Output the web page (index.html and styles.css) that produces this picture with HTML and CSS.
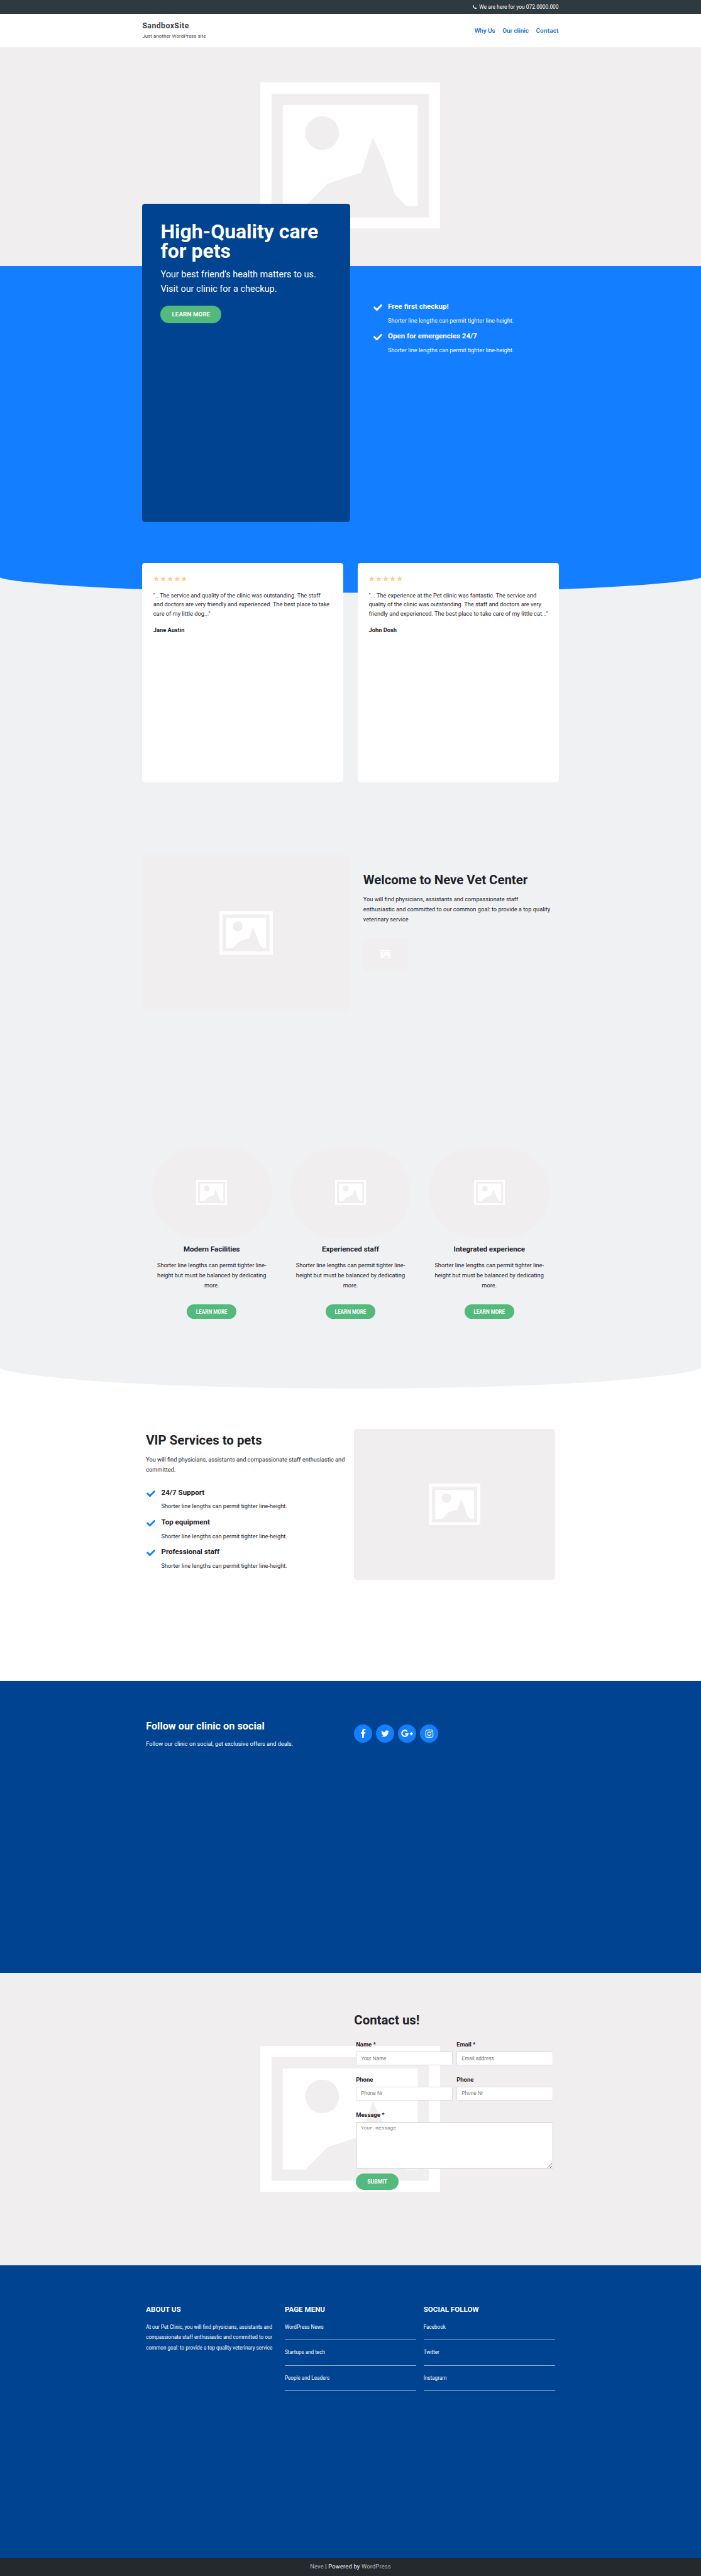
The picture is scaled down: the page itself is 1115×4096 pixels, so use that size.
FILE: index.html
```html
<!DOCTYPE html>
<html lang="en">
<head>
<meta charset="utf-8">
<title>SandboxSite</title>
<link rel="stylesheet" href="styles.css">
</head>
<body>
<svg width="0" height="0" class="defs" aria-hidden="true">
  <symbol id="placeholder" viewBox="0 0 16 13">
    <path fill="#fff" fill-rule="evenodd" d="M0 0H16V13H0ZM1 1V12H15V1Z"/>
    <path fill="#fff" d="M2 2H14V11H13L12 10L11 7L10.05 5.05Q10 4.95 9.95 5.05L9 8L6 9L4 11H2Z"/>
    <circle cx="5.5" cy="4.5" r="1.5" fill="#f0eeef"/>
  </symbol>
  <symbol id="check" viewBox="0 72 512 370">
    <path d="M173.898 439.404l-166.4-166.4c-9.997-9.997-9.997-26.206 0-36.204l36.203-36.204c9.997-9.998 26.207-9.998 36.204 0L192 312.69 432.095 72.596c9.997-9.997 26.207-9.997 36.204 0l36.203 36.204c9.997 9.997 9.997 26.206 0 36.204l-294.4 294.401c-9.998 9.997-26.207 9.997-36.204-.001z"/>
  </symbol>
  <symbol id="stars" viewBox="0 0 92 15">
    <g id="star"><path d="M7.5 0L9.8 4.8L15 5.5L11.2 9.2L12.1 14.5L7.5 12L2.9 14.5L3.8 9.2L0 5.5L5.2 4.8Z"/></g>
    <use href="#star" x="19.1"/><use href="#star" x="38.2"/><use href="#star" x="57.3"/><use href="#star" x="76.4"/>
  </symbol>
  <symbol id="curve" viewBox="0 0 1000 100" preserveAspectRatio="none">
    <path d="M500 97C126.7 96.3 .8 19.8 0 0H1000C999.2 19.8 873.3 96.3 500 97Z"/>
  </symbol>
</svg>

<div class="topbar">
  <div class="container topbar-inner">
    <svg class="phone" viewBox="0 0 11 11"><path fill="#fff" d="M0 2C0 1 1 0 2 0L3.6 3.2L2.7 4.6C3.4 6.3 4.7 7.6 6.4 8.3L7.8 7.4L11 9C11 10 10 11 9 11C4 11 0 7 0 2Z"/></svg>
    <span>We are here for you 072.0000.000</span>
  </div>
</div>

<header class="header">
  <div class="container header-inner">
    <div class="brand">
      <p class="brand-title">SandboxSite</p>
      <p class="brand-tag">Just another WordPress site</p>
    </div>
    <nav class="nav"><a class="nav-why">Why Us</a><a class="nav-clinic">Our clinic</a><a class="nav-contact">Contact</a></nav>
  </div>
</header>

<section class="hero"><svg class="hero-art"><use href="#placeholder"/></svg></section>

<section class="intro">
  <div class="container intro-inner">
    <div class="hero-card">
      <h1>High-Quality care<br>for pets</h1>
      <p>Your best friend’s health matters to us.<br>Visit our clinic for a checkup.</p>
      <a class="btn btn-large">LEARN MORE</a>
    </div>
    <ul class="checks checks-light">
      <li><svg><use href="#check"/></svg><div><h4>Free first checkup!</h4><p>Shorter line lengths can permit tighter line-height.</p></div></li>
      <li><svg><use href="#check"/></svg><div><h4>Open for emergencies 24/7</h4><p>Shorter line lengths can permit tighter line-height.</p></div></li>
    </ul>
  </div>
  <svg class="curve curve-blue"><use href="#curve"/></svg>
</section>

<section class="about">
  <div class="container quotes">
    <article class="quote">
      <svg class="stars"><use href="#stars"/></svg>
      <p>"...The service and quality of the clinic was outstanding. The staff<br>and doctors are very friendly and experienced. The best place to take<br>care of my little dog..."</p>
      <b>Jane Austin</b>
    </article>
    <article class="quote">
      <svg class="stars"><use href="#stars"/></svg>
      <p>"... The experience at the Pet clinic was fantastic. The service and<br>quality of the clinic was outstanding. The staff and doctors are very<br>friendly and experienced. The best place to take care of my little cat..."</p>
      <b>John Dosh</b>
    </article>
  </div>
  <div class="container welcome">
    <div class="pic pic-welcome"><svg><use href="#placeholder"/></svg></div>
    <div class="welcome-text">
      <h2>Welcome to Neve Vet Center</h2>
      <p class="text">You will find physicians, assistants and compassionate staff<br>enthusiastic and committed to our common goal: to provide a top quality<br>veterinary service</p>
      <div class="pic pic-sign"><svg><use href="#placeholder"/></svg></div>
    </div>
  </div>
  <div class="container features">
    <article><div class="pic pic-feature"><svg><use href="#placeholder"/></svg></div><h3>Modern Facilities</h3><p class="text">Shorter line lengths can permit tighter line-<br>height but must be balanced by dedicating<br>more.</p><a class="btn btn-small">LEARN MORE</a></article>
    <article><div class="pic pic-feature"><svg><use href="#placeholder"/></svg></div><h3>Experienced staff</h3><p class="text">Shorter line lengths can permit tighter line-<br>height but must be balanced by dedicating<br>more.</p><a class="btn btn-small">LEARN MORE</a></article>
    <article><div class="pic pic-feature"><svg><use href="#placeholder"/></svg></div><h3>Integrated experience</h3><p class="text">Shorter line lengths can permit tighter line-<br>height but must be balanced by dedicating<br>more.</p><a class="btn btn-small">LEARN MORE</a></article>
  </div>
  <svg class="curve curve-grey"><use href="#curve"/></svg>
</section>

<section class="vip">
  <div class="container vip-inner">
    <div class="vip-text">
      <h2>VIP Services to pets</h2>
      <p class="text">You will find physicians, assistants and compassionate staff enthusiastic and<br>committed.</p>
      <ul class="checks">
        <li><svg><use href="#check"/></svg><div><h4>24/7 Support</h4><p>Shorter line lengths can permit tighter line-height.</p></div></li>
        <li><svg><use href="#check"/></svg><div><h4>Top equipment</h4><p>Shorter line lengths can permit tighter line-height.</p></div></li>
        <li><svg><use href="#check"/></svg><div><h4>Professional staff</h4><p>Shorter line lengths can permit tighter line-height.</p></div></li>
      </ul>
    </div>
    <div class="pic pic-vip"><svg><use href="#placeholder"/></svg></div>
  </div>
</section>

<section class="social">
  <div class="container social-inner">
    <div class="social-text">
      <h2>Follow our clinic on social</h2>
      <p class="text">Follow our clinic on social, get exclusive offers and deals.</p>
    </div>
    <div class="social-icons">
      <a><svg viewBox="0 0 50 50"><path fill="#fff" d="M31.7 12.3V16.1H29.3C27.5 16.1 27.1 17 27.1 18.2V21.1H31.6L31 25.3H27.1V36H22.4V25.3H19V21.1H22.4V17.8C22.4 14.1 24.6 12.1 28 12.1C29.6 12.1 31 12.2 31.7 12.3Z"/></svg></a>
      <a><svg viewBox="0 0 50 50"><path fill="#fff" transform="translate(14.3 14) scale(.0425)" d="M459.37 151.716c.325 4.548.325 9.097.325 13.645 0 138.72-105.583 298.558-298.558 298.558-59.452 0-114.68-17.219-161.137-47.106 8.447.974 16.568 1.299 25.34 1.299 49.055 0 94.213-16.568 130.274-44.832-46.132-.975-84.792-31.188-98.112-72.772 6.498.974 12.995 1.624 19.818 1.624 9.421 0 18.843-1.3 27.614-3.573-48.081-9.747-84.143-51.98-84.143-102.985v-1.299c13.969 7.797 30.214 12.67 47.431 13.319-28.264-18.843-46.781-51.005-46.781-87.391 0-19.492 5.197-37.36 14.294-52.954 51.655 63.675 129.3 105.258 216.365 109.807-1.624-7.797-2.599-15.918-2.599-24.04 0-57.828 46.782-104.934 104.934-104.934 30.213 0 57.502 12.67 76.67 33.137 23.715-4.548 46.456-13.32 66.599-25.34-7.798 24.366-24.366 44.833-46.132 57.827 21.117-2.273 41.584-8.122 60.426-16.243-14.292 20.791-32.161 39.308-52.628 54.253z"/></svg></a>
      <a><svg viewBox="0 0 50 50" fill="none" stroke="#fff"><path stroke-width="3.6" d="M25.4 19.2A8.2 8.2 0 1 0 27 26H19.4"/><path stroke-width="3" d="M32.3 25.5H41.1M36.7 21.1V29.9"/></svg></a>
      <a><svg viewBox="0 0 50 50" fill="none" stroke="#fff" stroke-width="2"><rect x="15.7" y="15" width="19.8" height="20" rx="5.5"/><circle cx="25.5" cy="25.2" r="4.7"/><circle cx="31" cy="19.6" r="1.3" fill="#fff" stroke="none"/></svg></a>
    </div>
  </div>
</section>

<section class="contact">
  <svg class="hero-art"><use href="#placeholder"/></svg>
  <div class="container">
    <form class="form">
      <h2>Contact us!</h2>
      <div class="fields">
        <label>Name *<input placeholder="Your Name"></label>
        <label>Email *<input placeholder="Email address"></label>
        <label>Phone<input placeholder="Phone Nr"></label>
        <label>Phone<input placeholder="Phone Nr"></label>
        <label class="wide">Message *<textarea placeholder="Your message"></textarea></label>
      </div>
      <a class="btn btn-submit">SUBMIT</a>
    </form>
  </div>
</section>

<footer class="footer">
  <div class="container footer-inner">
    <div><h3>ABOUT US</h3><p class="footer-text">At our Pet Clinic, you will find physicians, assistants and<br>compassionate staff enthusiastic and committed to our<br>common goal: to provide a top quality veterinary service</p></div>
    <div><h3>PAGE MENU</h3><ul><li>WordPress News</li><li>Startups and tech</li><li>People and Leaders</li></ul></div>
    <div><h3>SOCIAL FOLLOW</h3><ul><li>Facebook</li><li>Twitter</li><li>Instagram</li></ul></div>
  </div>
</footer>
<div class="credits"><p><span>Neve</span> | Powered by <span>WordPress</span></p></div>
</body>
</html>
```
FILE: styles.css
```css
/* 1rem is 100 design pixels; the whole page is 70.51rem tall */
html { font-size: calc(100vh / 70.51); }
* { box-sizing: border-box; }
body { margin: 0; font-family: Roboto, sans-serif; font-size: .16rem; color: #1f2129; background: #fff; }
h1, h2, h3, h4, p, ul { margin: 0; padding: 0; }
ul { list-style: none; }
svg { display: block; }
.defs { position: absolute; }
.container { width: 11.4rem; margin: 0 auto; }
h2 { font-size: .351rem; line-height: .4rem; font-weight: 700; white-space: nowrap; }
.text { font-size: .1588rem; line-height: .27rem; white-space: nowrap; }

.btn { display: flex; align-items: center; justify-content: center; background: #54b97c; color: #fff; font-weight: 700; }
.btn-large { width: 1.67rem; height: .49rem; border-radius: .245rem; font-size: .171rem; }
.btn-small { width: 1.355rem; height: .4rem; border-radius: .2rem; font-size: .14rem; }
.btn-submit { width: 1.17rem; height: .45rem; border-radius: .225rem; font-size: .149rem; }

.topbar { height: .385rem; background: #2f3a40; color: #fff; }
.topbar-inner { height: 100%; display: flex; align-items: center; justify-content: flex-end; gap: .065rem; font-size: .1455rem; }
.phone { width: .105rem; height: .105rem; }

.header { height: .905rem; background: #fff; }
.header-inner { height: 100%; display: flex; justify-content: space-between; align-items: center; }
.brand { color: #404248; }
.brand-title { font-size: .21rem; line-height: .26rem; font-weight: 700; letter-spacing: .0085rem; }
.brand-tag { margin-top: .045rem; font-size: .134rem; line-height: .2rem; letter-spacing: .0022rem; }
.nav { display: flex; gap: .2rem; font-size: .17rem; font-weight: 500; color: #0366d6; padding-bottom: .02rem; }
.nav-contact { letter-spacing: .004rem; }

.hero { height: 6rem; background: #f0eeef; padding-top: .97rem; }
.hero-art { width: 4.928rem; height: 4.004rem; margin: 0 auto; }

.intro { height: 8.95rem; background: #eff1f3 linear-gradient(#137eff, #137eff) 0 0 / 100% 8.525rem no-repeat; display: flex; flex-direction: column; justify-content: space-between; }
.intro-inner { display: flex; height: 7rem; }
.hero-card { width: 5.7rem; height: 8.71rem; margin-top: -1.71rem; padding: .503rem .5rem; background: #004391; color: #fff; border-radius: .08rem; }
.hero-card h1 { font-size: .55rem; line-height: .52rem; font-weight: 700; white-space: nowrap; }
.hero-card p { margin: .21rem 0 .246rem; font-size: .249rem; line-height: .39rem; white-space: nowrap; }
.curve { width: 100%; }
.curve-blue { height: .433rem; fill: #137eff; }

.checks { display: grid; gap: .18rem; }
.checks li { display: flex; gap: .16rem; color: #1f2129; }
.checks svg { width: .245rem; height: .178rem; margin-top: .06rem; fill: #137eff; }
.checks h4 { font-size: .199rem; line-height: .24rem; font-weight: 700; }
.checks p { margin-top: .12rem; font-size: .158rem; line-height: .27rem; white-space: nowrap; }
.checks-light { align-self: flex-start; margin: .99rem 0 0 .62rem; }
.checks-light li { color: #fff; }
.checks-light svg { fill: #fff; }

.about { height: 21.78rem; background: #eff1f3 linear-gradient(#fff, #fff) 0 100% / 100% .58rem no-repeat; display: flex; flex-direction: column; }
.quotes { display: flex; gap: .4rem; margin-top: -.83rem; }
.quote { width: 5.5rem; height: 6rem; padding: .36rem .3rem; background: #fff; border-radius: .08rem; }
.stars { width: .92rem; height: .15rem; fill: #ffcd92; }
.quote p { margin: .255rem 0 .209rem; font-size: .159rem; line-height: .25rem; white-space: nowrap; }
.quote b { display: block; line-height: .25rem; }

.pic { background: #f0eeef; display: flex; align-items: center; justify-content: center; }
.welcome { display: flex; margin-top: 2rem; }
.pic-welcome { width: 5.7rem; height: 4.275rem; border-radius: .08rem; }
.pic-welcome svg { width: 1.463rem; height: 1.189rem; }
.welcome-text { padding: .488rem 0 0 .35rem; }
.welcome-text .text { margin: .187rem 0 .385rem; }
.pic-sign { width: 1.2rem; height: .9rem; }
.pic-sign svg { width: .308rem; height: .25rem; }

.features { display: grid; grid-template-columns: repeat(3, 3.8rem); margin-top: 3.722rem; }
.features article { display: flex; flex-direction: column; align-items: center; text-align: center; }
.pic-feature { width: 3.3rem; height: 2.48rem; border-radius: 1.24rem; }
.pic-feature svg { width: .85rem; height: .69rem; }
.features h3 { margin: .18rem 0 .179rem; font-size: .199rem; line-height: .26rem; }
.features .text { margin-bottom: .39rem; }
.curve-grey { height: .58rem; margin-top: auto; fill: #eff1f3; }

.vip { height: 7.99rem; padding-top: 1.09rem; }
.vip-inner { display: flex; }
.vip-text { width: 5.8rem; padding: .127rem 0 0 .1rem; }
.vip-text > .text { margin: .178rem 0 .385rem; }
.vip-text .checks { padding-left: .015rem; }
.pic-vip { width: 5.5rem; height: 4.13rem; border-radius: .08rem; }
.pic-vip svg { width: 1.41rem; height: 1.146rem; }

.social { height: 8rem; background: #004391; color: #fff; }
.social-inner { display: flex; }
.social-text { width: 5.8rem; padding: 1.075rem 0 0 .1rem; }
.social h2 { font-size: .28rem; line-height: .34rem; }
.social .text { margin-top: .173rem; }
.social-icons { display: flex; gap: .1rem; padding-top: 1.19rem; }
.social-icons a { width: .5rem; height: .5rem; border-radius: 50%; background: #137eff; }
.social-icons svg { width: .5rem; height: .5rem; }

.contact { display: grid; height: 8rem; background: #f0eeef; }
.contact > * { grid-area: 1 / 1; }
.contact .hero-art { margin-top: 1.985rem; }
.form { margin-left: 5.8rem; padding-top: 1.089rem; position: relative; }
.fields { display: grid; grid-template-columns: 2.645rem 2.645rem; gap: .29rem .11rem; margin: .368rem 0 .105rem .05rem; }
.fields label { font-size: .163rem; line-height: .2rem; font-weight: 700; }
.fields .wide { grid-column: 1 / 3; }
input, textarea { display: block; width: 100%; margin: .09rem 0 0; padding: 0 .12rem; border: 1px solid #ddd; border-radius: .03rem; background: #fff; }
input { height: .38rem; font: .14rem "Liberation Sans", sans-serif; }
textarea { height: 1.305rem; padding-top: .1rem; border-color: #c8c8c8; font: .1333rem "Liberation Mono", monospace; }
::placeholder { color: #757575; opacity: 1; }
.btn-submit { margin-left: .05rem; }

.footer { height: 8rem; background: #004391; color: #fff; }
.footer-inner { display: grid; grid-template-columns: 3.8rem 3.8rem 3.8rem; padding: 1.107rem 0 0 .1rem; }
.footer h3 { margin-bottom: .192rem; font-size: .2rem; line-height: .24rem; }
.footer-text { font-size: .14rem; line-height: .29rem; white-space: nowrap; }
.footer ul { width: 3.6rem; }
.footer li { height: .505rem; margin-bottom: .195rem; border-bottom: 1px solid rgba(255, 255, 255, .65); font-size: .14rem; line-height: .29rem; }

.credits { height: .5rem; display: flex; justify-content: center; background: #24292e; color: #fff; font-size: .16rem; line-height: .49rem; letter-spacing: .0034rem; }
.credits span { color: #bdbfc1; }
```
